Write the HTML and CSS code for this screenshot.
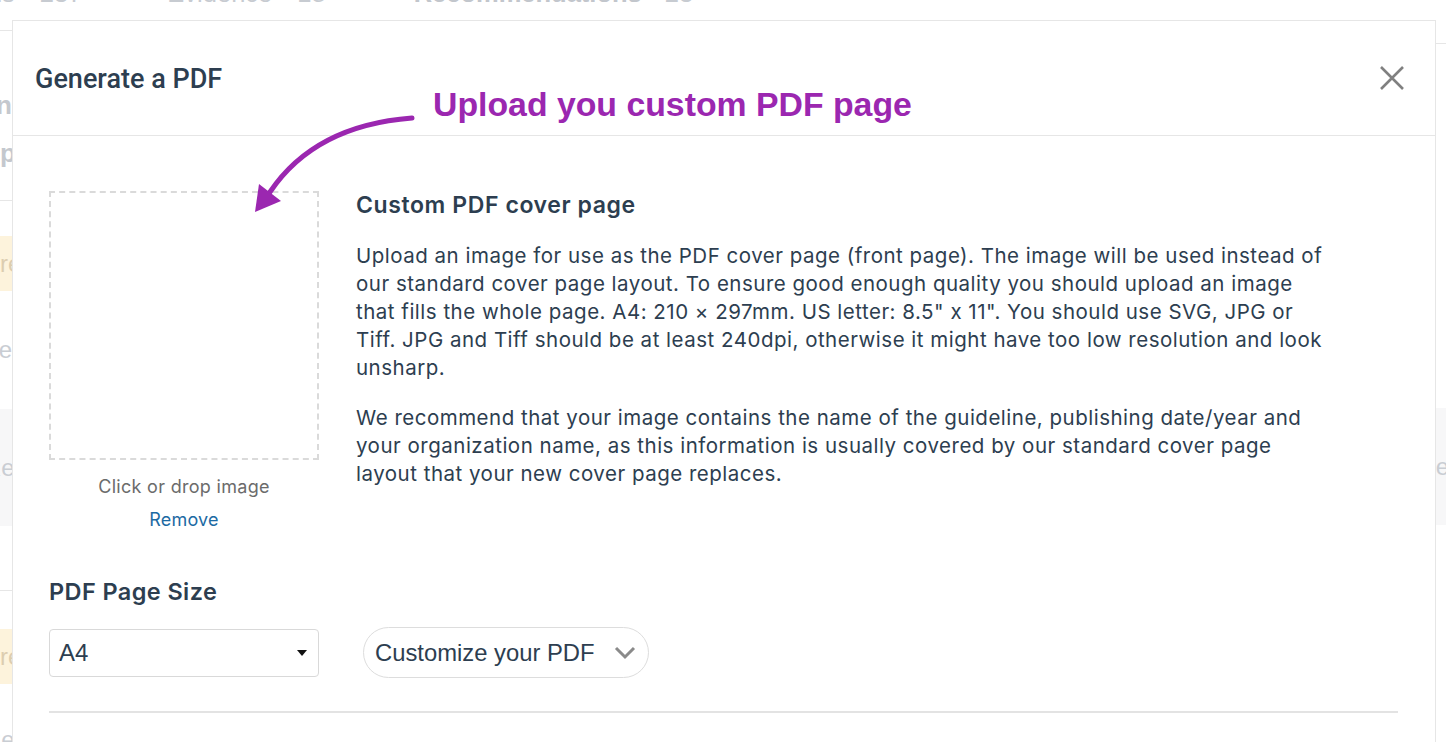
FILE: index.html
```html
<!DOCTYPE html>
<html lang="en">
<head>
<meta charset="utf-8">
<title>Generate a PDF</title>
<link rel="stylesheet" href="styles.css">
</head>
<body>
<div class="page">
  <div class="tabs">
    <span class="tab tab-first"><span class="tab-name">Questions</span><span class="tab-count">237</span></span>
    <span class="tab"><span class="tab-name">Evidence</span><span class="tab-count">18</span></span>
    <span class="tab tab-strong"><span class="tab-name">Recommendations</span><span class="tab-count">23</span></span>
  </div>
  <div class="side side-left">
    <div class="side-head"><span>Section</span><span>Group</span></div>
    <div class="side-row side-yellow"><span class="cut-re">Pre</span></div>
    <div class="side-row side-tall"><span class="cut-e">Type</span></div>
    <div class="side-row side-grey"><span class="cut-ea">Rea</span></div>
    <div class="side-row side-end"></div>
    <div class="side-row side-yellow side-yellow-2"><span class="cut-re">Pre</span></div>
    <div class="side-row side-last"><span class="cut-ec">Rec</span></div>
  </div>
  <div class="side side-right">
    <div class="side-right-line"></div>
    <div class="side-row side-grey"><span>Type</span></div>
  </div>
</div>

<div class="modal">
  <div class="modal-header">
    <h2 class="modal-title">Generate a PDF</h2>
    <button class="close" aria-label="Close">
      <svg width="26" height="26" viewBox="0 0 26 26"><path d="M2 2 L24 24 M24 2 L2 24" stroke="#808080" stroke-width="2.6" fill="none"/></svg>
    </button>
  </div>
  <div class="modal-body">
    <div class="cover-row">
      <div class="drop-col">
        <div class="dropzone"></div>
        <div class="drop-label">Click or drop image</div>
        <a class="remove" href="#">Remove</a>
      </div>
      <div class="cover-text">
        <h3 class="cover-title">Custom PDF cover page</h3>
        <p>Upload an image for use as the PDF cover page (front page). The image will be used instead of our standard cover page layout. To ensure good enough quality you should upload an image that fills the whole page. A4: 210 × 297mm. US letter: 8.5" x 11". You should use SVG, JPG or Tiff. JPG and Tiff should be at least 240dpi, otherwise it might have too low resolution and look unsharp.</p>
        <p>We recommend that your image contains the name of the guideline, publishing date/year and your organization name, as this information is usually covered by our standard cover page layout that your new cover page replaces.</p>
      </div>
    </div>
    <h3 class="size-title">PDF Page Size</h3>
    <div class="size-row">
      <div class="select"><span>A4</span><span class="caret"></span></div>
      <button class="customize"><span>Customize your PDF</span>
        <svg width="22" height="14" viewBox="0 0 22 14"><path d="M2 2 L11 11 L20 2" stroke="#8a8a8a" stroke-width="3" fill="none"/></svg>
      </button>
    </div>
    <div class="divider"></div>
  </div>
</div>

<div class="annotation">
  <span class="annotation-text">Upload you custom PDF page</span>
  <svg class="annotation-arrow" width="180" height="120" viewBox="240 100 180 120">
    <path d="M412 118 C360 122 305 140 270 192" stroke="#9b27b0" stroke-width="5" fill="none" stroke-linecap="round"/>
    <path d="M255 212 L259 184 L281 201 Z" fill="#9b27b0"/>
  </svg>
</div>
</body>
</html>
```

FILE: styles.css
```css
* { box-sizing: border-box; }
html, body { margin: 0; padding: 0; }
body {
  width: 1446px;
  height: 742px;
  overflow: hidden;
  background: #fff;
  font-family: "Inter", "Liberation Sans", sans-serif;
  position: relative;
}

/* faded page behind the modal */
.page { position: relative; width: 1446px; height: 742px; overflow: hidden; }
.tabs {
  display: flex;
  height: 30px;
  margin-top: -22px;
  margin-left: -100px;
  font-family: "Liberation Sans", sans-serif;
  font-size: 25.5px;
  line-height: 30px;
  color: #c7cbd1;
  white-space: nowrap;
}
.tab { display: inline-flex; gap: 25px; margin-right: 88px; }
.tab-first { margin-right: 85px; }
.tab-strong { gap: 23px; }
.tab-strong .tab-name { font-weight: 700; color: #c2c6cc; }

.side { position: absolute; overflow: hidden; }
.side-left { left: 0; top: 30px; width: 12px; height: 712px; border-top: 1px solid #e6e6e6; }
.side-right { left: 1436px; top: 43px; width: 10px; height: 699px; }
.side-right-line { height: 365px; border-top: 1px solid #e6e6e6; }

.side-head {
  height: 170px;
  padding-top: 50px;
  display: flex; flex-direction: column;
  font-family: "Liberation Sans", sans-serif;
  font-weight: 700; font-size: 26px; line-height: 48px;
  color: #c4c8ce;
  border-bottom: 1px solid #e6e6e6;
}
.side-head span:first-child { margin-left: -82px; }
.side-head span:last-child { margin-left: -62px; }

.side-row {
  display: flex; align-items: center;
  height: 55px;
  font-family: "Liberation Sans", sans-serif;
  font-size: 24px; color: #c9cdd3;
  white-space: nowrap;
}
.side-yellow { background: #fdf3dc; color: #dccdb0; margin-top: 35px; }
.side-yellow-2 { margin-top: 38px; }
.side-tall { height: 118px; }
.side-grey { background: #f7f7f8; height: 117px; }
.side-end { height: 65px; border-bottom: 1px solid #e6e6e6; }
.side-last { height: 70px; align-items: flex-end; }
.cut-re { margin-left: -16px; }
.cut-e { margin-left: -40px; }
.cut-ea { margin-left: -16px; }
.cut-ec { margin-left: -16px; }
.side-right .side-grey span { margin-left: -39px; }

/* modal */
.modal {
  position: absolute;
  left: 12px; top: 20px;
  width: 1424px; height: 760px;
  background: #fff;
  border: 1px solid #e6e6e6;
}
.modal-header {
  height: 115px;
  display: flex; align-items: center; justify-content: space-between;
  padding: 0 30px 0 22px;
  border-bottom: 1px solid #e6e6e6;
}
.modal-title {
  margin: 2px 0 0;
  font-family: "Roboto", "Liberation Sans", sans-serif;
  font-weight: 500;
  font-size: 27px;
  color: #2d3e50;
}
.close { background: none; border: 0; padding: 0; width: 26px; height: 26px; margin-top: -1px; }
.close svg { display: block; }

.modal-body { padding: 55px 37px 0 36px; }
.cover-row { display: flex; gap: 37px; }
.drop-col { width: 270px; flex: none; display: flex; flex-direction: column; align-items: center; }
.dropzone {
  width: 270px; height: 269px;
  border: 2px dashed #dadada;
}
.drop-label { margin-top: 16px; font-size: 18px; letter-spacing: 0.3px; color: #6b6b6b; line-height: 22px; }
.remove { margin-top: 11px; font-size: 18px; letter-spacing: 0.2px; color: #1c6aa3; text-decoration: none; line-height: 22px; }

.cover-text { width: 978px; color: #2d3e50; }
.cover-title { margin: 0; font-size: 23px; letter-spacing: 0.6px; font-weight: 600; line-height: 28px; color: #2d3e50; }
.cover-text p { margin: 23px 0 0; font-size: 20.5px; letter-spacing: 0.5px; line-height: 28px; }
.cover-text p + p { margin-top: 22px; }

.size-title {
  margin: 46px 0 0;
  font-size: 23.5px; letter-spacing: 0.4px; font-weight: 600; line-height: 30px; color: #2d3e50;
}
.size-row { display: flex; align-items: center; gap: 44px; margin-top: 20px; }
.select {
  width: 270px; height: 48px;
  border: 1px solid #d9d9d9; border-radius: 4px;
  display: flex; align-items: center; justify-content: space-between;
  padding: 0 11px 0 9px;
  font-family: "Liberation Sans", sans-serif; font-size: 24px; color: #2d3e50;
}
.caret { width: 0; height: 0; border-left: 5px solid transparent; border-right: 5px solid transparent; border-top: 6px solid #111; }
.customize {
  height: 51px; padding: 0 12px 0 11px;
  border: 1px solid #dddddd; border-radius: 26px; background: #fff;
  display: flex; align-items: center; gap: 19px;
  font-family: "Liberation Sans", sans-serif; font-size: 23.8px; color: #2d3e50;
}
.divider { margin-top: 33px; height: 2px; background: #e3e3e3; }

/* annotation overlay */
.annotation { position: absolute; left: 0; top: 0; width: 0; height: 0; }
.annotation-text {
  position: absolute; left: 433px; top: 84px;
  font-family: "Liberation Sans", sans-serif; font-weight: 700;
  font-size: 33.8px; line-height: 40px; color: #9b27b0;
  white-space: nowrap;
}
.annotation-arrow { position: absolute; left: 240px; top: 100px; }
```
